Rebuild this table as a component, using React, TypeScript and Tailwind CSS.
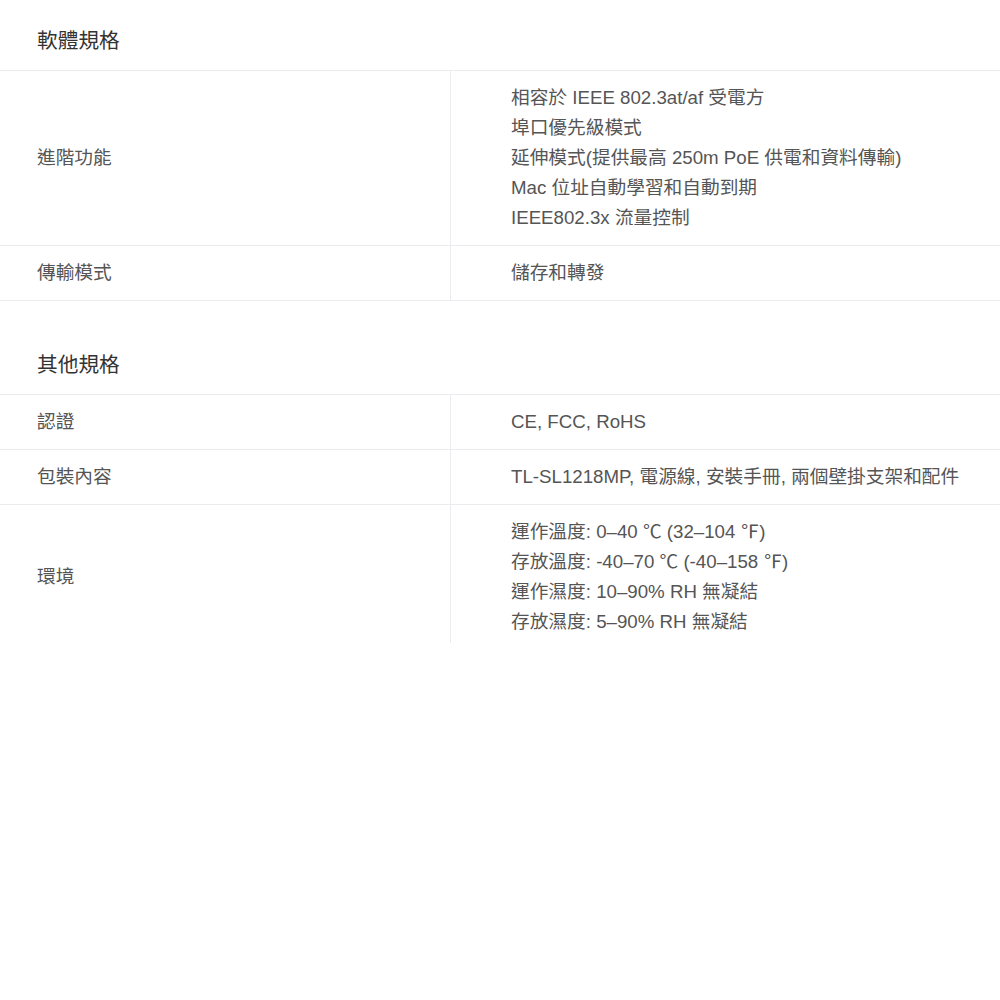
const sections = [
  {
    title: "軟體規格",
    rows: [
      {
        label: "進階功能",
        values: [
          "相容於 IEEE 802.3at/af 受電方",
          "埠口優先級模式",
          "延伸模式(提供最高 250m PoE 供電和資料傳輸)",
          "Mac 位址自動學習和自動到期",
          "IEEE802.3x 流量控制",
        ],
      },
      { label: "傳輸模式", values: ["儲存和轉發"] },
    ],
  },
  {
    title: "其他規格",
    rows: [
      { label: "認證", values: ["CE, FCC, RoHS"] },
      { label: "包裝內容", values: ["TL-SL1218MP, 電源線, 安裝手冊, 兩個壁掛支架和配件"] },
      {
        label: "環境",
        values: [
          "運作溫度: 0–40 ℃ (32–104 ℉)",
          "存放溫度: -40–70 ℃ (-40–158 ℉)",
          "運作濕度: 10–90% RH 無凝結",
          "存放濕度: 5–90% RH 無凝結",
        ],
      },
    ],
  },
]

export default function App() {
  return (
    <div className="min-h-screen w-[1000px] bg-white font-['Liberation_Sans','Noto_Sans_CJK_TC',sans-serif]">
      {sections.map((section, si) => (
        <section key={section.title} className={si > 0 ? "mt-[23px]" : ""}>
          <h2 className="pl-[37px] pt-[26px] pb-[14px] text-[20.7px] leading-[30px] text-[#333]">
            {section.title}
          </h2>
          <div className="border-t border-[#ebebf0]">
            {section.rows.map((row, ri) => {
              const last = si === sections.length - 1 && ri === section.rows.length - 1
              return (
                <div
                  key={row.label}
                  className={
                    "grid grid-cols-[451px_1fr] text-[18.7px] leading-[30px] text-[#555] " +
                    (last ? "" : "border-b border-[#ebebf0]")
                  }
                >
                  <div
                    className={
                      "flex items-center border-r border-[#ebebf0] pl-[37px] pt-[12px] " +
                      (last ? "pb-[6px]" : "pb-[12px]")
                    }
                  >
                    {row.label}
                  </div>
                  <div
                    className={"flex flex-col pl-[60px] pt-[12px] " + (last ? "pb-[6px]" : "pb-[12px]")}
                  >
                    {row.values.map((v) => (
                      <span key={v}>{v}</span>
                    ))}
                  </div>
                </div>
              )
            })}
          </div>
        </section>
      ))}
    </div>
  )
}
